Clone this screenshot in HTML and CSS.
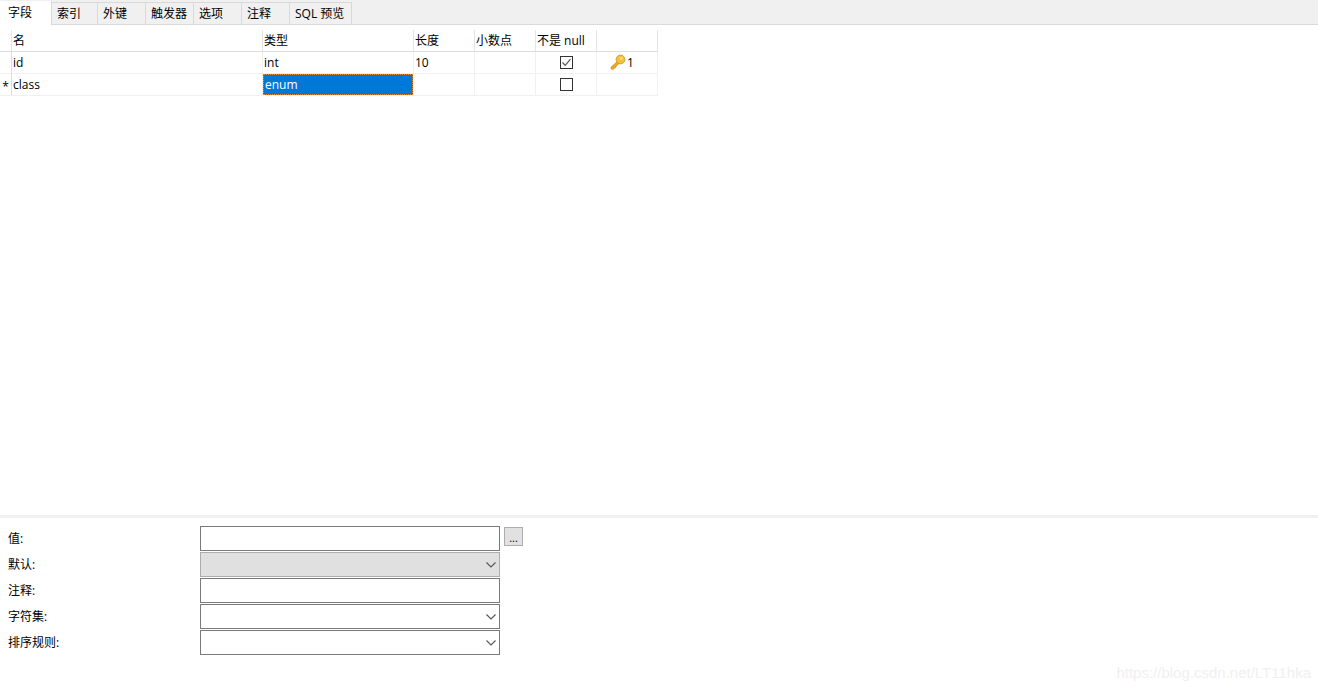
FILE: index.html
```html
<!DOCTYPE html>
<html lang="zh">
<head>
<meta charset="utf-8">
<title>字段</title>
<link rel="stylesheet" href="styles.css">
</head>
<body>
<div class="app">
  <div class="tabs">
    <div class="tab active t0">字段</div>
    <div class="tab t1">索引</div>
    <div class="tab t2">外键</div>
    <div class="tab t2">触发器</div>
    <div class="tab t2">选项</div>
    <div class="tab t2">注释</div>
    <div class="tab t3">SQL 预览</div>
  </div>
  <div class="table-area">
    <div class="grid">
      <div class="cell head gut"></div>
      <div class="cell head">名</div>
      <div class="cell head">类型</div>
      <div class="cell head">长度</div>
      <div class="cell head">小数点</div>
      <div class="cell head">不是 null</div>
      <div class="cell head"></div>

      <div class="cell gut"></div>
      <div class="cell">id</div>
      <div class="cell">int</div>
      <div class="cell">10</div>
      <div class="cell"></div>
      <div class="cell center">
        <svg class="check" width="13" height="13" viewBox="0 0 13 13"><rect x="0.5" y="0.5" width="12" height="12" fill="#fff" stroke="#333"/><path d="M2.5 6.5 L5.2 9.3 L10.5 3.2" fill="none" stroke="#555" stroke-width="1.2"/></svg>
      </div>
      <div class="cell keycell">
        <svg width="17" height="17" viewBox="0 0 17 17"><path d="M8.6 7.2 L2 13.2 L2.2 15 L4.2 15.4 L5.4 14 L6.6 13.8 L7 12.4 L10.4 9.2 Z" fill="#eba91f" stroke="#c98a10" stroke-width="0.7"/><circle cx="11.5" cy="5.5" r="4.4" fill="#f5c13c" stroke="#d0920f" stroke-width="0.8"/><circle cx="12.4" cy="4.5" r="1.2" fill="#fbe7a4"/></svg>
        <span>1</span>
      </div>

      <div class="cell gut mark">*</div>
      <div class="cell">class</div>
      <div class="cell selected"><span class="sel-box">enum</span></div>
      <div class="cell"></div>
      <div class="cell"></div>
      <div class="cell center">
        <svg class="check" width="13" height="13" viewBox="0 0 13 13"><rect x="0.5" y="0.5" width="12" height="12" fill="#fff" stroke="#333"/></svg>
      </div>
      <div class="cell"></div>
    </div>
  </div>
  <div class="divider"></div>
  <div class="form">
    <div class="label">值:</div>
    <div class="field-row">
      <div class="control"></div>
      <div class="more">...</div>
    </div>
    <div class="label">默认:</div>
    <div class="control select disabled"><svg width="10" height="6" viewBox="0 0 10 6"><path d="M0.5 0.5 L5 5 L9.5 0.5" fill="none" stroke="#555" stroke-width="1.1"/></svg></div>
    <div class="label">注释:</div>
    <div class="control"></div>
    <div class="label">字符集:</div>
    <div class="control select"><svg width="10" height="6" viewBox="0 0 10 6"><path d="M0.5 0.5 L5 5 L9.5 0.5" fill="none" stroke="#555" stroke-width="1.1"/></svg></div>
    <div class="label">排序规则:</div>
    <div class="control select"><svg width="10" height="6" viewBox="0 0 10 6"><path d="M0.5 0.5 L5 5 L9.5 0.5" fill="none" stroke="#555" stroke-width="1.1"/></svg></div>
  </div>
  <div class="watermark">https://blog.csdn.net/LT11hka</div>
</div>
</body>
</html>
```
FILE: styles.css
```css
* { box-sizing: border-box; }
html, body { margin: 0; padding: 0; height: 100%; background: #fff; overflow: hidden; }
body {
  font-family: "Open Sans", "Noto Sans CJK SC", sans-serif;
  font-size: 12px;
  color: #000;
}
.app { position: relative; display: flex; flex-direction: column; height: 691px; width: 1318px; }

.tabs {
  display: flex;
  align-items: flex-end;
  height: 25px;
  flex: none;
  background: #f0f0f0;
  border-bottom: 1px solid #d9d9d9;
  padding-top: 2px;
}
.tab {
  height: 22px;
  line-height: 22px;
  padding-left: 4px;
  background: #f0f0f0;
  border-right: 1px solid #d9d9d9;
  border-top: 1px solid #d9d9d9;
}
.tab.active {
  height: 24px;
  margin-bottom: -1px;
  align-self: flex-end;
  background: #fff;
  border-top: 0;
  padding-left: 8px;
  line-height: 23px;
  letter-spacing: 0;
}
.t0 { width: 52px; }
.t1 { width: 46px; }
.t2 { width: 48px; }
.t3 { width: 62px; }
.tab:not(.active) { padding-left: 4px; }
.t1, .t2, .t3 { text-indent: 1px; }

.table-area { flex: 1; padding-top: 5px; min-height: 0; }
.grid {
  display: grid;
  width: 658px;
  grid-template-columns: 12px 251px 151px 61px 61px 61px 61px;
  grid-template-rows: 22px 22px 22px;
}
.cell {
  border-right: 1px solid #f0f0f0;
  border-bottom: 1px solid #f0f0f0;
  padding-left: 1px;
  line-height: 21px;
  white-space: nowrap;
  overflow: hidden;
}
.cell.head { border-bottom: 1px solid #dcdcdc; border-right: 1px solid #e4e4e4; padding-left: 1px; }
.gut { padding: 0; text-align: center; border-right-color: #dcdcdc; }
.mark { font-size: 12px; line-height: 25px; }
.center { display: flex; align-items: center; justify-content: center; padding: 0; }
.keycell { display: flex; align-items: center; padding-left: 12px; gap: 1px; }
.selected { padding: 0; background: #0078d7; color: #fff; border-color: #f0f0f0; }
.sel-box {
  display: block;
  height: 21px;
  line-height: 21px;
  padding-left: 1px;
  border: 1px dotted #d98a3d;
  line-height: 20px;
}

.divider { height: 3px; flex: none; background: #f0f0f0; }

.form {
  flex: none;
  height: 173px;
  padding: 8px 0 0 8px;
  display: grid;
  grid-template-columns: 192px 1fr;
  grid-auto-rows: 25px;
  row-gap: 1px;
}
.label { line-height: 25px; }
.field-row { display: flex; align-items: flex-start; gap: 4px; }
.control {
  width: 300px;
  height: 25px;
  border: 1px solid #7a7a7a;
  background: #fff;
  display: flex;
  align-items: center;
  justify-content: flex-end;
  padding-right: 3px;
}
.disabled { background: #e0e0e0; border-color: #adadad; }
.more {
  width: 19px;
  height: 19px;
  margin-top: 1px;
  background: #e1e1e1;
  border: 1px solid #adadad;
  text-align: center;
  line-height: 19px;
  font-size: 11px;
}
.watermark {
  position: absolute;
  right: 7px;
  top: 664px;
  font-family: "Liberation Sans", sans-serif;
  font-size: 15px;
  color: #f0f0f0;
  white-space: nowrap;
}
```
